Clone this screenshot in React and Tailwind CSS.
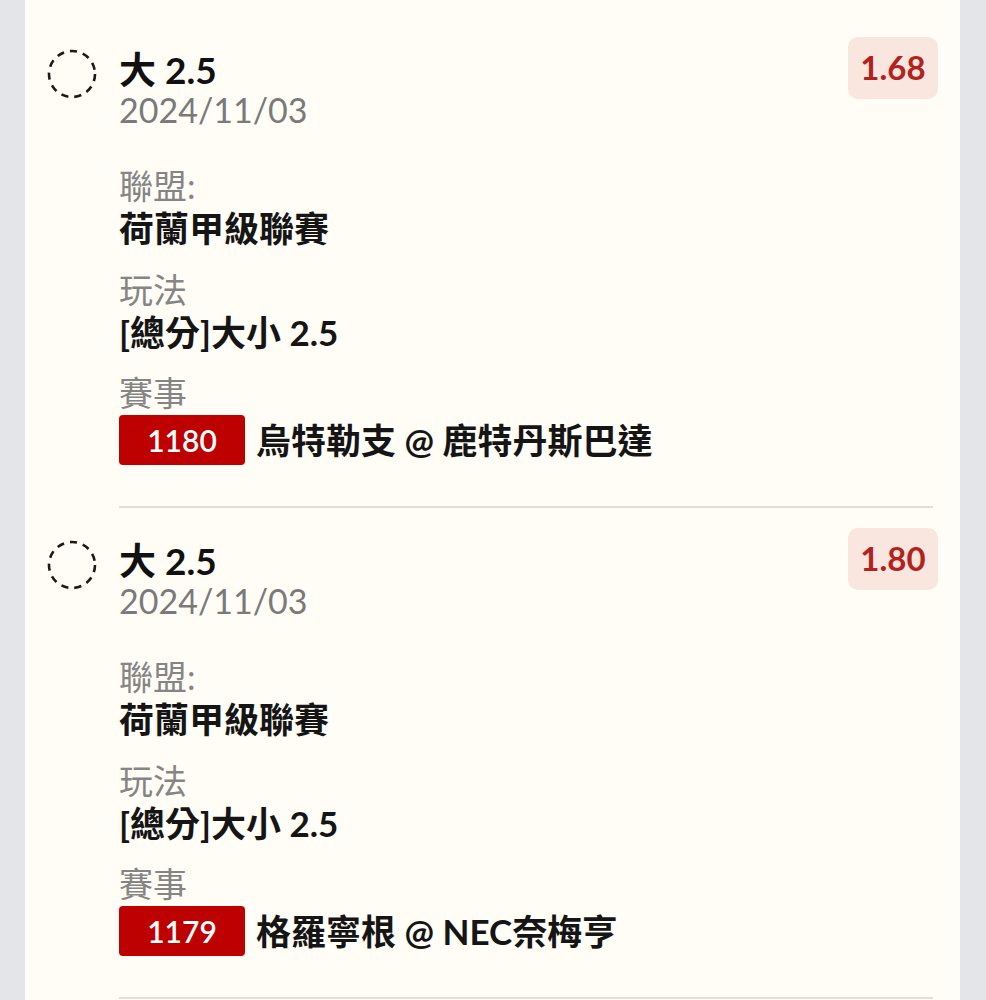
import React from "react";

const items = [
  { odds: "1.68", code: "1180", match: "烏特勒支 @ 鹿特丹斯巴達" },
  { odds: "1.80", code: "1179", match: "格羅寧根 @ NEC奈梅亨" },
];

function DashedCircle() {
  return (
    <svg width="50" height="50" viewBox="0 0 50 50" className="shrink-0">
      <circle
        cx="25"
        cy="25"
        r="23"
        fill="none"
        stroke="#1a1a1a"
        strokeWidth="2.6"
        strokeDasharray="7.2 6"
        strokeLinecap="butt"
      />
    </svg>
  );
}

function Field({ label, children }) {
  return (
    <div className="mt-[20px] first:mt-0">
      <div className="h-[42px] leading-[42px] text-[34px] text-[#858585]">{label}</div>
      {children}
    </div>
  );
}

function Item({ odds, code, match }) {
  return (
    <div>
      <div className="flex items-start pt-[20px] pb-[41px] px-[22px]">
        <div className="mt-[12px]">
          <DashedCircle />
        </div>
        <div className="ml-[22px] flex-1 min-w-0">
          <div className="mt-[13px] h-[40px] leading-[40px] text-[37px] font-bold text-[#111111]">
            大 2.5
          </div>
          <div className="h-[40px] leading-[40px] text-[34px] text-[#7a7a7a]">2024/11/03</div>
          <div className="mt-[35px]">
            <Field label="聯盟:">
              <div className="h-[42px] leading-[42px] text-[35px] font-bold text-[#151515]">
                荷蘭甲級聯賽
              </div>
            </Field>
            <Field label="玩法">
              <div className="h-[42px] leading-[42px] text-[35px] font-bold text-[#151515]">
                [總分]大小 2.5
              </div>
            </Field>
            <div className="mt-[19px]">
              <div className="h-[42px] leading-[42px] text-[34px] text-[#858585]">賽事</div>
              <div className="flex items-center mt-[1px]">
                <div className="w-[126px] h-[50px] rounded-[4px] bg-[#bd0000] text-white text-[30px] font-semibold flex items-center justify-center">
                  {code}
                </div>
                <div className="ml-[11px] text-[35px] font-bold text-[#151515] leading-[50px] whitespace-nowrap">
                  {match}
                </div>
              </div>
            </div>
          </div>
        </div>
        <div className="w-[90px] h-[62px] rounded-[10px] bg-[#f8e6df] text-[#b3221c] text-[33px] font-bold flex items-center justify-center">
          {odds}
        </div>
      </div>
      <div className="ml-[94px] mr-[27px] h-[2px] bg-[#e2dfda]" />
    </div>
  );
}

export default function App() {
  return (
    <div
      className="min-h-screen bg-[#e4e5e9] pl-[25px] pr-[26px]"
      style={{ fontFamily: "Lato, 'Noto Sans CJK TC', sans-serif" }}
    >
      <div className="bg-[#fffdf6] min-h-screen pt-[17px]">
        {items.map((it) => (
          <Item key={it.code} {...it} />
        ))}
      </div>
    </div>
  );
}
